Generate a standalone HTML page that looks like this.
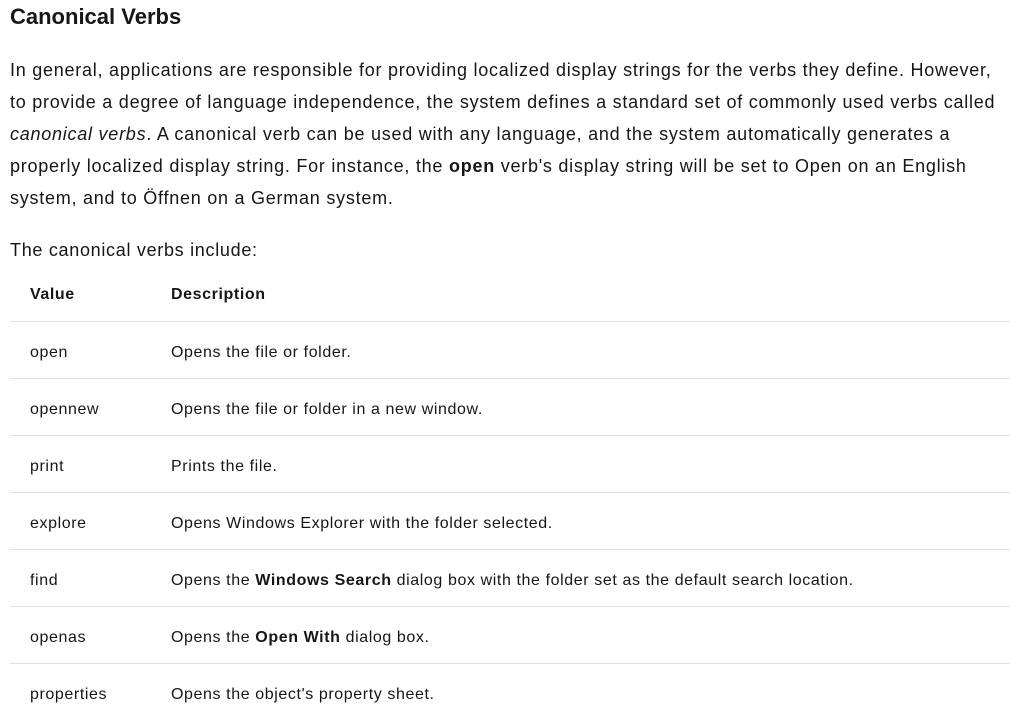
<!DOCTYPE html>
<html><head><style>
body{margin:0;background:#fff;color:#161616;font-family:"Liberation Sans",sans-serif;width:1032px;height:727px;overflow:hidden;position:relative}
.a{position:absolute;white-space:nowrap}
h2{position:absolute;left:10px;top:3px;margin:0;font-size:22px;font-weight:bold;line-height:28px}
.p{left:10px;font-size:18px;letter-spacing:0.75px;line-height:32px;top:54px}
table{position:absolute;left:10px;top:264px;width:1000px;border-collapse:collapse;font-size:16px;letter-spacing:0.6px}
td,th{text-align:left;padding:5px 0 0 20px;height:51px;border-bottom:1px solid #e0e0e0;white-space:nowrap;box-sizing:content-box}
th{font-weight:bold;height:53px;padding-top:4px}
tr:last-child td{border-bottom:none}
td:first-child,th:first-child{width:121px}
</style></head><body>
<h2>Canonical Verbs</h2>
<div class="a p">In general, applications are responsible for providing localized display strings for the verbs they define. However,<br>to provide a degree of language independence, the system defines a standard set of commonly used verbs called<br><i>canonical verbs</i>. A canonical verb can be used with any language, and the system automatically generates a<br>properly localized display string. For instance, the <b>open</b> verb's display string will be set to Open on an English<br>system, and to Öffnen on a German system.</div>
<div class="a" style="left:10px;top:236px;font-size:18px;letter-spacing:0.7px;line-height:28px">The canonical verbs include:</div>
<table>
<tr><th>Value</th><th>Description</th></tr>
<tr><td>open</td><td>Opens the file or folder.</td></tr>
<tr><td>opennew</td><td>Opens the file or folder in a new window.</td></tr>
<tr><td>print</td><td>Prints the file.</td></tr>
<tr><td>explore</td><td>Opens Windows Explorer with the folder selected.</td></tr>
<tr><td>find</td><td>Opens the <b>Windows Search</b> dialog box with the folder set as the default search location.</td></tr>
<tr><td>openas</td><td>Opens the <b>Open With</b> dialog box.</td></tr>
<tr><td>properties</td><td>Opens the object's property sheet.</td></tr>
</table>
</body></html>
